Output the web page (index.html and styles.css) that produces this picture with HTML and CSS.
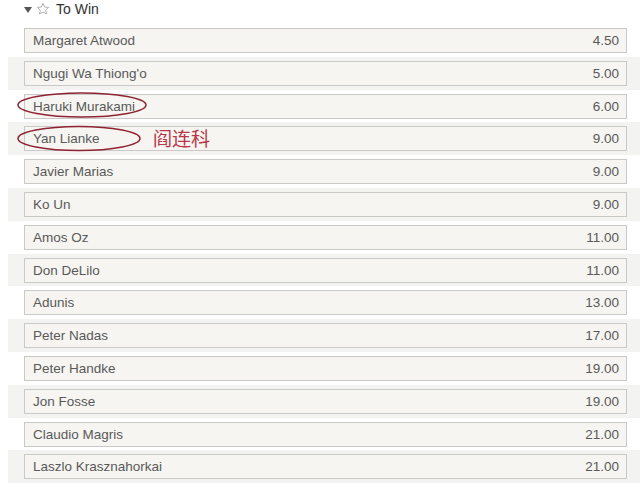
FILE: index.html
```html
<!DOCTYPE html>
<html>
<head>
	<meta charset="utf-8">
	<title>To Win</title>
	<link rel="stylesheet" href="styles.css">
</head>
<body>
<div class="market">
	<div class="market-hd">
		<span class="arrow"></span>
		<svg class="star" width="14" height="14" viewBox="0 0 24 24">
			<path d="M12 2.5l2.9 6.1 6.6.8-4.9 4.6 1.3 6.6L12 17.3l-5.9 3.3 1.3-6.6-4.9-4.6 6.6-.8z" fill="none" stroke="#aaa" stroke-width="1.6" stroke-linejoin="round"/>
		</svg>
		<span class="title">To Win</span>
	</div>
	<ul class="odds">
		<li><div class="cell"><span>Margaret Atwood</span><span>4.50</span></div></li>
		<li><div class="cell"><span>Ngugi Wa Thiong'o</span><span>5.00</span></div></li>
		<li><div class="cell"><span>Haruki Murakami</span><span>6.00</span></div></li>
		<li><div class="cell"><span>Yan Lianke</span><span>9.00</span></div></li>
		<li><div class="cell"><span>Javier Marias</span><span>9.00</span></div></li>
		<li><div class="cell"><span>Ko Un</span><span>9.00</span></div></li>
		<li><div class="cell"><span>Amos Oz</span><span>11.00</span></div></li>
		<li><div class="cell"><span>Don DeLilo</span><span>11.00</span></div></li>
		<li><div class="cell"><span>Adunis</span><span>13.00</span></div></li>
		<li><div class="cell"><span>Peter Nadas</span><span>17.00</span></div></li>
		<li><div class="cell"><span>Peter Handke</span><span>19.00</span></div></li>
		<li><div class="cell"><span>Jon Fosse</span><span>19.00</span></div></li>
		<li><div class="cell"><span>Claudio Magris</span><span>21.00</span></div></li>
		<li><div class="cell"><span>Laszlo Krasznahorkai</span><span>21.00</span></div></li>
	</ul>
	<!-- 手写的红圈标注 -->
	<svg class="marks" width="640" height="483">
		<ellipse cx="82" cy="105" rx="64" ry="12" fill="none" stroke="#8e2433" stroke-width="1.5"/>
		<ellipse cx="79" cy="138.5" rx="61" ry="12" fill="none" stroke="#8e2433" stroke-width="1.5"/>
	</svg>
	<span class="note">阎连科</span>
</div>
</body>
</html>
```
FILE: styles.css
```css
* {
	margin: 0;
	padding: 0;
	box-sizing: border-box;
}
body {
	background: #fff;
	font-family: "Liberation Sans", Arial, sans-serif;
	font-size: 13.5px;
	color: #595959;
}
.market {
	position: relative;
	width: 640px;
	height: 483px;
	overflow: hidden;
}
.market-hd {
	height: 24px;
	display: flex;
	align-items: flex-start;
	padding: 2px 0 0 24px;
	gap: 4px;
}
.arrow {
	width: 0;
	height: 0;
	margin-top: 5px;
	border-left: 4.5px solid transparent;
	border-right: 4.5px solid transparent;
	border-top: 6px solid #555;
}
.title {
	color: #333;
	font-size: 14px;
	line-height: 15px;
	margin-left: 2px;
}
.odds {
	list-style: none;
}
.odds li {
	height: 32.8px;
	padding: 4px 13px 3.8px 16px;
	margin-left: 8px;
}
.odds li:nth-child(even) {
	background: #f3f3f1;
}
.cell {
	height: 25px;
	display: flex;
	justify-content: space-between;
	align-items: center;
	padding: 0 7px 0 8px;
	background: #f6f5f1;
	border: 1px solid #c9c9c7;
}
.marks {
	position: absolute;
	left: 0;
	top: 0;
	pointer-events: none;
}
.note {
	position: absolute;
	left: 153px;
	top: 127px;
	font-family: "Noto Sans CJK SC", sans-serif;
	font-size: 19px;
	line-height: 22px;
	color: #b8384a;
}
```
